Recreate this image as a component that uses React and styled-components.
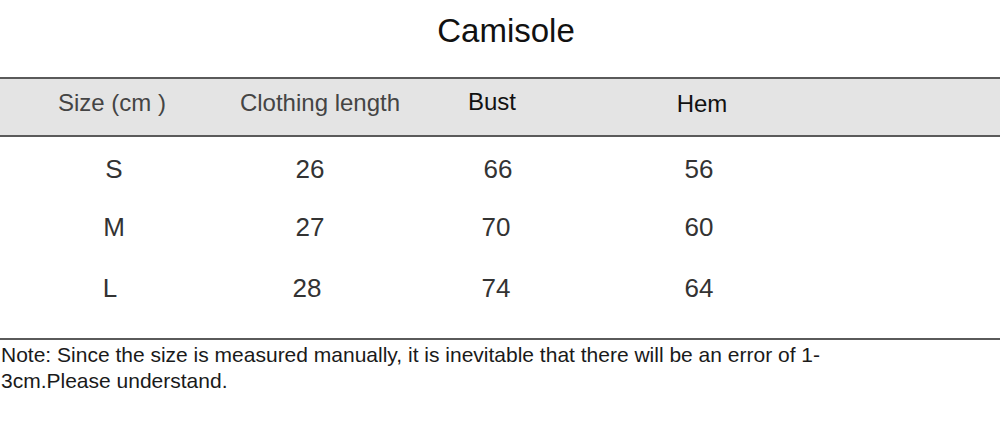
import React from "react";
import styled, { createGlobalStyle } from "styled-components";

const Global = createGlobalStyle`
  html, body { margin: 0; padding: 0; background: #fff; }
  body { font-family: "Liberation Sans", Arial, sans-serif; color: #222; }
`;

const Page = styled.div`
  width: 1000px;
  height: 426px;
  display: flex;
  flex-direction: column;
  overflow: hidden;
`;

const Title = styled.h1`
  margin: 0;
  padding-top: 12px;
  height: 77px;
  box-sizing: border-box;
  text-align: center;
  font-size: 33px;
  font-weight: 400;
  color: #111;
  padding-left: 12px;
  line-height: 37px;
`;

const Grid = styled.div`
  display: grid;
  grid-template-columns: 224px 176px 194px 212px 1fr;
`;

const HeaderRow = styled(Grid)`
  height: 60px;
  box-sizing: border-box;
  background: #e4e4e4;
  border-top: 2px solid #5a5a5a;
  border-bottom: 2px solid #5a5a5a;
  align-items: center;
`;

const HeadCell = styled.div`
  text-align: center;
  font-size: 24px;
  color: ${(p) => (p.$dark ? "#111" : "#444")};
  transform: translate(${(p) => p.$dx || 0}px, ${(p) => p.$dy || 0}px);
`;

const Body = styled.div`
  display: flex;
  flex-direction: column;
  padding-top: 4px;
  height: 203px;
  box-sizing: border-box;
  border-bottom: 2px solid #5a5a5a;
`;

const Row = styled(Grid)`
  height: ${(p) => p.$h}px;
  align-items: center;
`;

const Cell = styled.div`
  text-align: center;
  font-size: 26px;
  color: #333;
  transform: translateX(${(p) => p.$dx || 0}px);
`;

const Note = styled.p`
  margin: 0;
  padding: 2px 0 0 1px;
  width: 830px;
  font-size: 21px;
  line-height: 26px;
  color: #1a1a1a;
`;

const rows = [
  { h: 57, v: ["S", "26", "66", "56"], dx: [2, -2, 1, -1] },
  { h: 59, v: ["M", "27", "70", "60"], dx: [2, -2, -1, -1] },
  { h: 62, v: ["L", "28", "74", "64"], dx: [-2, -5, -1, -1] },
];

export default function App() {
  return (
    <Page>
      <Global />
      <Title>Camisole</Title>
      <HeaderRow>
        <HeadCell $dy={-4}>Size (cm )</HeadCell>
        <HeadCell $dx={8} $dy={-4}>Clothing length</HeadCell>
        <HeadCell $dark $dx={-5} $dy={-5}>Bust</HeadCell>
        <HeadCell $dark $dx={2} $dy={-3}>Hem</HeadCell>
        <div />
      </HeaderRow>
      <Body>
        {rows.map((r) => (
          <Row key={r.v[0]} $h={r.h}>
            {r.v.map((t, i) => (
              <Cell key={i} $dx={r.dx[i]}>{t}</Cell>
            ))}
            <div />
          </Row>
        ))}
      </Body>
      <Note>
        Note: Since the size is measured manually, it is inevitable that there will be an error of 1-
        3cm.Please understand.
      </Note>
    </Page>
  );
}
